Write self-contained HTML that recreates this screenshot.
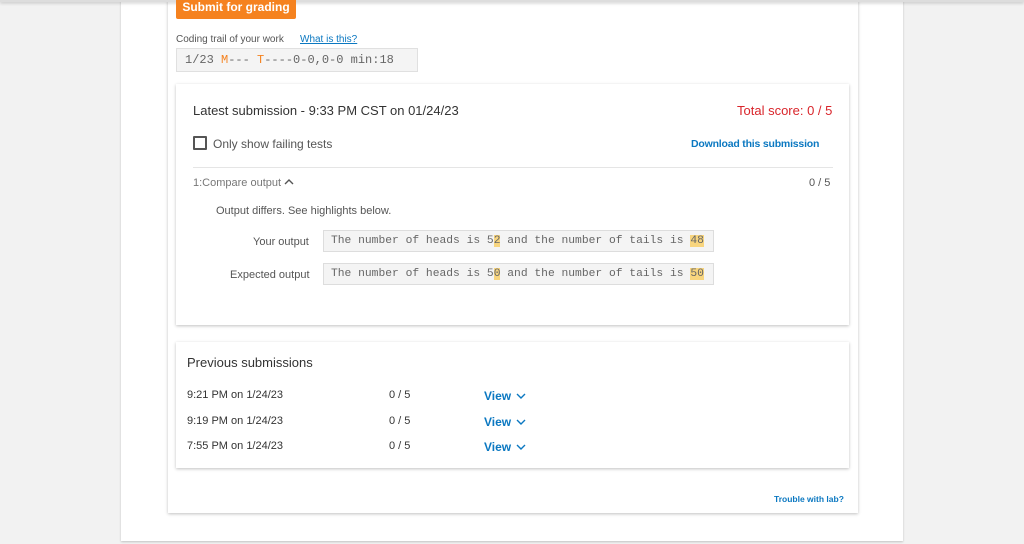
<!DOCTYPE html>
<html><head><style>
*{margin:0;padding:0;box-sizing:border-box}
body{width:1024px;height:544px;background:#f2f2f2;font-family:"Liberation Sans",sans-serif;position:relative;overflow:hidden;color:#333}
.abs{position:absolute}
.page{left:121px;top:0;width:782px;height:541px;background:#fff;box-shadow:0 1px 2px rgba(0,0,0,.2)}
.topbar{left:0;top:0;width:1024px;height:2px;background:#ddd;box-shadow:0 1px 3px rgba(0,0,0,.25)}
.inner{left:168px;top:0;width:690px;height:513px;background:#fff;box-shadow:0 1px 3px rgba(0,0,0,.25)}
.card{background:#fff;box-shadow:0 1px 3px rgba(0,0,0,.25)}
.btn{left:176px;top:-4px;width:120px;height:23px;background:#f5821f;color:#fff;font-weight:bold;font-size:12px;text-align:center;line-height:22px;border-radius:2px}
.mono{font-family:"Liberation Mono",monospace}
.hl{background:#f8d57e}
.out{height:22px;background:#f4f4f4;border:1px solid #ddd;font-size:11.3px;line-height:21px;padding-left:7px;color:#666;white-space:pre}
.blue{color:#0b78c1;font-weight:bold;font-size:11px}
.t{font-size:12px;white-space:nowrap}
</style></head><body>
<div class="abs page"></div>
<div class="abs inner"></div>
<div class="abs topbar"></div>
<div class="abs btn">Submit for grading</div>
<div class="abs t" style="left:176px;top:34px;font-size:10px;color:#555">Coding trail of your work</div>
<div class="abs t" style="left:300px;top:34px;font-size:10px;color:#0b78c1;text-decoration:underline">What is this?</div>
<div class="abs mono" style="left:176px;top:48px;width:242px;height:24px;background:#f4f4f4;border:1px solid #e0e0e0;font-size:12px;line-height:23px;padding-left:8px;color:#666;white-space:pre">1/23 <span style="color:#f5821f">M</span>--- <span style="color:#f5821f">T</span>----0-0,0-0 min:18</div>

<div class="abs card" style="left:176px;top:84px;width:673px;height:241px"></div>
<div class="abs t" style="left:193px;top:103px;font-size:13px;color:#333">Latest submission - 9:33 PM CST on 01/24/23</div>
<div class="abs t" style="left:737px;top:103px;font-size:13px;color:#d9252b">Total score: 0 / 5</div>
<div class="abs" style="left:193px;top:136px;width:14px;height:14px;border:2px solid #555;border-radius:1px"></div>
<div class="abs t" style="left:213px;top:137px;font-size:12px;color:#555">Only show failing tests</div>
<div class="abs blue t" style="left:691px;top:138px;font-size:10.5px;letter-spacing:-0.2px">Download this submission</div>
<div class="abs" style="left:193px;top:167px;width:640px;height:1px;background:#e5e5e5"></div>
<div class="abs t" style="left:193px;top:177px;font-size:11px;color:#777">1:Compare output <svg width="10" height="8" viewBox="0 0 10 8"><path d="M1 6 L5 2 L9 6" stroke="#555" stroke-width="1.4" fill="none"/></svg></div>
<div class="abs t" style="left:809px;top:177px;font-size:11px;color:#555">0 / 5</div>
<div class="abs t" style="left:216px;top:205px;font-size:11px;color:#555">Output differs. See highlights below.</div>
<div class="abs t" style="left:253px;top:236px;font-size:11px;color:#555">Your output</div>
<div class="abs t" style="left:230px;top:269px;font-size:11px;color:#555">Expected output</div>
<div class="abs out mono" style="left:323px;top:230px;width:391px">The number of heads is 5<span class="hl">2</span> and the number of tails is <span class="hl">48</span></div>
<div class="abs out mono" style="left:323px;top:263px;width:391px">The number of heads is 5<span class="hl">0</span> and the number of tails is <span class="hl">50</span></div>

<div class="abs card" style="left:176px;top:342px;width:673px;height:126px"></div>
<div class="abs t" style="left:187px;top:355px;font-size:13px;color:#333">Previous submissions</div>
<div class="abs t" style="left:187px;top:389px;font-size:11px">9:21 PM on 1/24/23</div>
<div class="abs t" style="left:187px;top:415px;font-size:11px">9:19 PM on 1/24/23</div>
<div class="abs t" style="left:187px;top:440px;font-size:11px">7:55 PM on 1/24/23</div>
<div class="abs t" style="left:389px;top:389px;font-size:11px">0 / 5</div>
<div class="abs t" style="left:389px;top:415px;font-size:11px">0 / 5</div>
<div class="abs t" style="left:389px;top:440px;font-size:11px">0 / 5</div>
<div class="abs blue t" style="left:484px;top:389px">View <svg width="10" height="8" viewBox="0 0 10 8" style="margin-left:2px"><path d="M1 2 L5 6 L9 2" stroke="#0b78c1" stroke-width="1.4" fill="none"/></svg></div>
<div class="abs blue t" style="left:484px;top:415px">View <svg width="10" height="8" viewBox="0 0 10 8" style="margin-left:2px"><path d="M1 2 L5 6 L9 2" stroke="#0b78c1" stroke-width="1.4" fill="none"/></svg></div>
<div class="abs blue t" style="left:484px;top:440px">View <svg width="10" height="8" viewBox="0 0 10 8" style="margin-left:2px"><path d="M1 2 L5 6 L9 2" stroke="#0b78c1" stroke-width="1.4" fill="none"/></svg></div>
<div class="abs blue t" style="left:774px;top:494px;font-size:8.5px">Trouble with lab?</div>
</body></html>
